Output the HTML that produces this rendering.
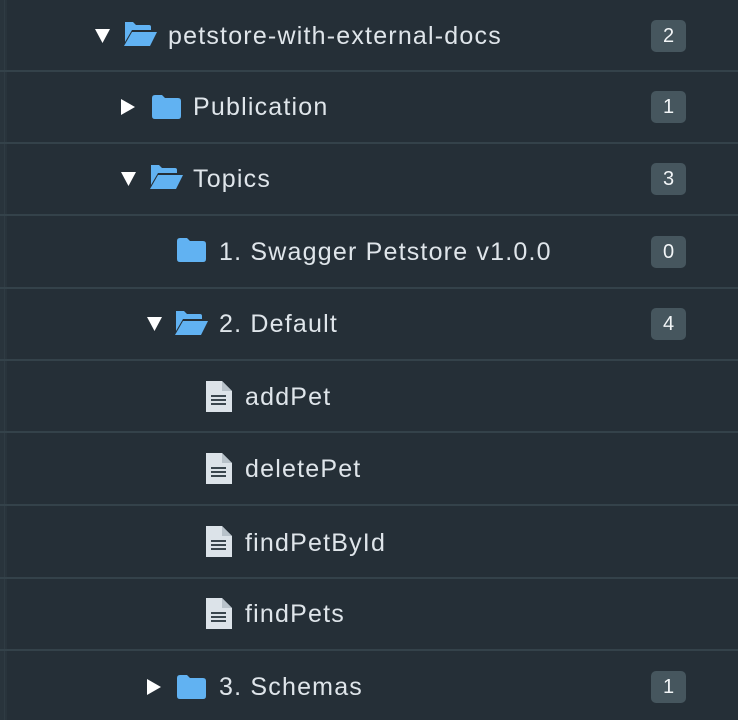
<!DOCTYPE html>
<html><head><meta charset="utf-8"><style>
html,body{margin:0;padding:0;}
body{width:738px;height:720px;background:#252f37;position:relative;overflow:hidden;font-family:"Liberation Sans","DejaVu Sans",sans-serif;}
.stripe{position:absolute;left:0;top:0;width:7px;height:720px;background:#29343c;}
.stripe:after{content:"";position:absolute;left:4px;top:0;width:1px;height:720px;background:#2f3b43;}
.div{position:absolute;left:0;width:738px;height:2px;background:#34424a;}
.t{position:absolute;color:#dfe5ea;font-size:25px;letter-spacing:1.2px;line-height:30px;white-space:nowrap;}
.b{position:absolute;left:651px;width:35px;height:32px;border-radius:5px;background:#46565e;color:#f2f5f7;font-size:20px;text-align:center;line-height:32px;}
svg{position:absolute;}
</style></head><body>
<div class="stripe"></div>
<div class="div" style="top:70px"></div>
<div class="div" style="top:142px"></div>
<div class="div" style="top:214px"></div>
<div class="div" style="top:287px"></div>
<div class="div" style="top:359px"></div>
<div class="div" style="top:431px"></div>
<div class="div" style="top:504px"></div>
<div class="div" style="top:577px"></div>
<div class="div" style="top:649px"></div>

<svg style="left:95px;top:28px" width="15" height="16" viewBox="0 0 15 16"><path d="M0 1H15L7.5 15Z" fill="#fff"/></svg>
<svg style="left:123px;top:22px" width="35" height="25" viewBox="0 0 35 25"><path d="M2 0H10L13 3H26Q28 3 28 5V8H9L2 20Z" fill="#61b2f2"/><path d="M9 10H34L27 24H1Z" fill="#61b2f2"/></svg>
<div class="t" style="left:168px;top:21px">petstore-with-external-docs</div>
<div class="b" style="top:20px">2</div>

<svg style="left:121px;top:99px" width="14" height="16" viewBox="0 0 14 16"><path d="M0 0L14 8L0 16Z" fill="#fff"/></svg>
<svg style="left:152px;top:95px" width="29" height="24" viewBox="0 0 29 24"><path d="M3 0H10L13 3H26Q29 3 29 6V21Q29 24 26 24H3Q0 24 0 21V3Q0 0 3 0Z" fill="#61b2f2"/></svg>
<div class="t" style="left:193px;top:92px">Publication</div>
<div class="b" style="top:91px">1</div>

<svg style="left:121px;top:171px" width="15" height="16" viewBox="0 0 15 16"><path d="M0 1H15L7.5 15Z" fill="#fff"/></svg>
<svg style="left:149px;top:165px" width="35" height="25" viewBox="0 0 35 25"><path d="M2 0H10L13 3H26Q28 3 28 5V8H9L2 20Z" fill="#61b2f2"/><path d="M9 10H34L27 24H1Z" fill="#61b2f2"/></svg>
<div class="t" style="left:193px;top:164px">Topics</div>
<div class="b" style="top:163px">3</div>

<svg style="left:177px;top:238px" width="29" height="24" viewBox="0 0 29 24"><path d="M3 0H10L13 3H26Q29 3 29 6V21Q29 24 26 24H3Q0 24 0 21V3Q0 0 3 0Z" fill="#61b2f2"/></svg>
<div class="t" style="left:219px;top:237px">1. Swagger Petstore v1.0.0</div>
<div class="b" style="top:236px">0</div>

<svg style="left:147px;top:316px" width="15" height="16" viewBox="0 0 15 16"><path d="M0 1H15L7.5 15Z" fill="#fff"/></svg>
<svg style="left:174px;top:311px" width="35" height="25" viewBox="0 0 35 25"><path d="M2 0H10L13 3H26Q28 3 28 5V8H9L2 20Z" fill="#61b2f2"/><path d="M9 10H34L27 24H1Z" fill="#61b2f2"/></svg>
<div class="t" style="left:219px;top:309px">2. Default</div>
<div class="b" style="top:308px">4</div>

<svg style="left:205px;top:381px" width="27" height="32" viewBox="0 0 27 32"><path d="M1 0H17L27 10V31H1Z" fill="#dce3e9"/><path d="M17 0V10H27" fill="#b8c2ca"/><rect x="6" y="14" width="15" height="2" fill="#3a464e"/><rect x="6" y="18" width="15" height="2" fill="#3a464e"/><rect x="6" y="22" width="15" height="2" fill="#3a464e"/></svg>
<div class="t" style="left:245px;top:382px">addPet</div>
<svg style="left:205px;top:453px" width="27" height="32" viewBox="0 0 27 32"><path d="M1 0H17L27 10V31H1Z" fill="#dce3e9"/><path d="M17 0V10H27" fill="#b8c2ca"/><rect x="6" y="14" width="15" height="2" fill="#3a464e"/><rect x="6" y="18" width="15" height="2" fill="#3a464e"/><rect x="6" y="22" width="15" height="2" fill="#3a464e"/></svg>
<div class="t" style="left:245px;top:454px">deletePet</div>
<svg style="left:205px;top:526px" width="27" height="32" viewBox="0 0 27 32"><path d="M1 0H17L27 10V31H1Z" fill="#dce3e9"/><path d="M17 0V10H27" fill="#b8c2ca"/><rect x="6" y="14" width="15" height="2" fill="#3a464e"/><rect x="6" y="18" width="15" height="2" fill="#3a464e"/><rect x="6" y="22" width="15" height="2" fill="#3a464e"/></svg>
<div class="t" style="left:245px;top:528px">findPetById</div>
<svg style="left:205px;top:598px" width="27" height="32" viewBox="0 0 27 32"><path d="M1 0H17L27 10V31H1Z" fill="#dce3e9"/><path d="M17 0V10H27" fill="#b8c2ca"/><rect x="6" y="14" width="15" height="2" fill="#3a464e"/><rect x="6" y="18" width="15" height="2" fill="#3a464e"/><rect x="6" y="22" width="15" height="2" fill="#3a464e"/></svg>
<div class="t" style="left:245px;top:599px">findPets</div>

<svg style="left:147px;top:679px" width="14" height="16" viewBox="0 0 14 16"><path d="M0 0L14 8L0 16Z" fill="#fff"/></svg>
<svg style="left:177px;top:675px" width="29" height="24" viewBox="0 0 29 24"><path d="M3 0H10L13 3H26Q29 3 29 6V21Q29 24 26 24H3Q0 24 0 21V3Q0 0 3 0Z" fill="#61b2f2"/></svg>
<div class="t" style="left:219px;top:672px">3. Schemas</div>
<div class="b" style="top:671px">1</div>
</body></html>
